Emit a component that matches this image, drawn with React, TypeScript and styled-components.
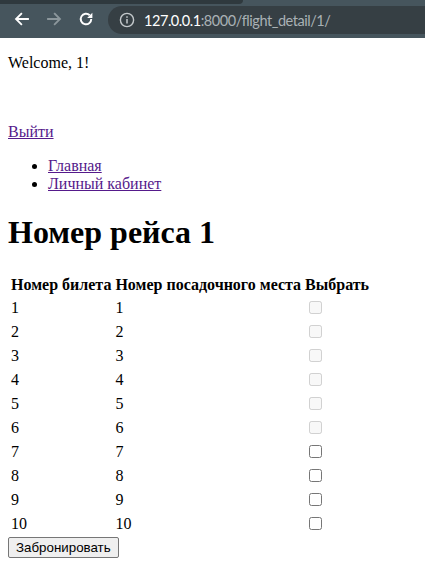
import React from "react";
import styled, { createGlobalStyle } from "styled-components";

const GlobalStyle = createGlobalStyle`
  html, body { margin: 0; padding: 0; background: #ffffff; }
  body { font-family: "Liberation Serif", "Times New Roman", serif; font-size: 16px; color: #000; }
`;

const BrowserBar = styled.div`
  position: relative;
  height: 38px;
  background: #46555d;
  display: flex;
  align-items: center;
  padding: 0 0 0 6px;
  box-sizing: border-box;
`;

const TabStrip = styled.div`
  position: absolute;
  left: 0;
  top: 0;
  width: 243px;
  height: 4px;
  background: #2f393e;
  border-bottom-right-radius: 4px;
`;

const NavButton = styled.div<{ $dim?: boolean }>`
  width: 32px;
  height: 28px;
  display: flex;
  align-items: center;
  justify-content: center;
  color: ${(p) => (p.$dim ? "#8c979c" : "#ffffff")};
`;

const UrlPill = styled.div`
  flex: 1;
  margin-left: 6px;
  height: 28px;
  margin-top: 2px;
  background: #363f44;
  border-radius: 14px 0 0 14px;
  display: flex;
  align-items: center;
  padding-left: 11px;
  gap: 9px;
  font-family: "Lato", "Open Sans", sans-serif;
  font-size: 14.5px;
  letter-spacing: -0.45px;
`;

const Host = styled.span`
  color: #ffffff;
`;

const PathPart = styled.span`
  color: #a9b1b5;
`;

const Page = styled.div`
  padding: 16px 8px 8px;
`;

const Greeting = styled.p`
  margin: 0 0 51px;
`;

const LogoutLink = styled.a`
  display: block;
  color: #551a8b;
  text-decoration: underline;
`;

const NavList = styled.ul`
  margin: 16px 0;
  padding-left: 40px;
  list-style: disc;
`;

const NavLink = styled.a`
  color: #551a8b;
  text-decoration: underline;
`;

const Title = styled.h1`
  font-size: 32px;
  font-weight: bold;
  margin: 21.44px 0;
`;

const SeatTable = styled.table`
  border-collapse: separate;
  border-spacing: 2px;
`;

const HeadCell = styled.th`
  padding: 1px;
  font-weight: bold;
  text-align: left;
`;

const Cell = styled.td`
  padding: 1px;
`;

const SeatCheck = styled.input`
  margin: 3px 3px 3px 4px;
  width: 13px;
  height: 13px;
`;

const BookButton = styled.button`
  font-family: "Liberation Sans", Arial, sans-serif;
  font-size: 13.33px;
  padding: 1px 7px;
  background: #efefef;
  border: 1px solid #767676;
  border-radius: 2px;
  color: #000;
  height: 21px;
`;

const BackIcon = () => (
  <svg width="18" height="18" viewBox="0 0 24 24" fill="none" stroke="currentColor" strokeWidth="2.4" strokeLinecap="square">
    <path d="M20 12H5M11 5l-7 7 7 7" />
  </svg>
);

const ForwardIcon = () => (
  <svg width="18" height="18" viewBox="0 0 24 24" fill="none" stroke="currentColor" strokeWidth="2.4" strokeLinecap="square">
    <path d="M4 12h15M13 5l7 7-7 7" />
  </svg>
);

const ReloadIcon = () => (
  <svg width="18" height="18" viewBox="0 0 24 24" fill="none">
    <path d="M19 12a7 7 0 1 1-2.05-4.95" stroke="currentColor" strokeWidth="2.6" />
    <path d="M20.5 3.5v7h-7z" fill="currentColor" />
  </svg>
);

const InfoIcon = () => (
  <svg width="16" height="16" viewBox="0 0 16 16" fill="none">
    <circle cx="8" cy="8" r="6.6" stroke="#c4c9cc" strokeWidth="1.4" />
    <rect x="7.25" y="7" width="1.5" height="4.5" fill="#c4c9cc" />
    <rect x="7.25" y="4.3" width="1.5" height="1.5" fill="#c4c9cc" />
  </svg>
);

const seats = Array.from({ length: 10 }, (_, i) => i + 1);

export default function App() {
  return (
    <>
      <GlobalStyle />
      <BrowserBar>
        <TabStrip />
        <NavButton>
          <BackIcon />
        </NavButton>
        <NavButton $dim>
          <ForwardIcon />
        </NavButton>
        <NavButton>
          <ReloadIcon />
        </NavButton>
        <UrlPill>
          <InfoIcon />
          <span>
            <Host>127.0.0.1</Host>
            <PathPart>:8000/flight_detail/1/</PathPart>
          </span>
        </UrlPill>
      </BrowserBar>
      <Page>
        <Greeting>Welcome, 1!</Greeting>
        <LogoutLink href="#">Выйти</LogoutLink>
        <NavList>
          <li>
            <NavLink href="#">Главная</NavLink>
          </li>
          <li>
            <NavLink href="#">Личный кабинет</NavLink>
          </li>
        </NavList>
        <Title>Номер рейса 1</Title>
        <form onSubmit={(e) => e.preventDefault()}>
          <SeatTable>
            <thead>
              <tr>
                <HeadCell>Номер билета</HeadCell>
                <HeadCell>Номер посадочного места</HeadCell>
                <HeadCell>Выбрать</HeadCell>
              </tr>
            </thead>
            <tbody>
              {seats.map((n) => (
                <tr key={n}>
                  <Cell>{n}</Cell>
                  <Cell>{n}</Cell>
                  <Cell>
                    <SeatCheck type="checkbox" disabled={n <= 6} />
                  </Cell>
                </tr>
              ))}
            </tbody>
          </SeatTable>
          <BookButton type="submit">Забронировать</BookButton>
        </form>
      </Page>
    </>
  );
}
